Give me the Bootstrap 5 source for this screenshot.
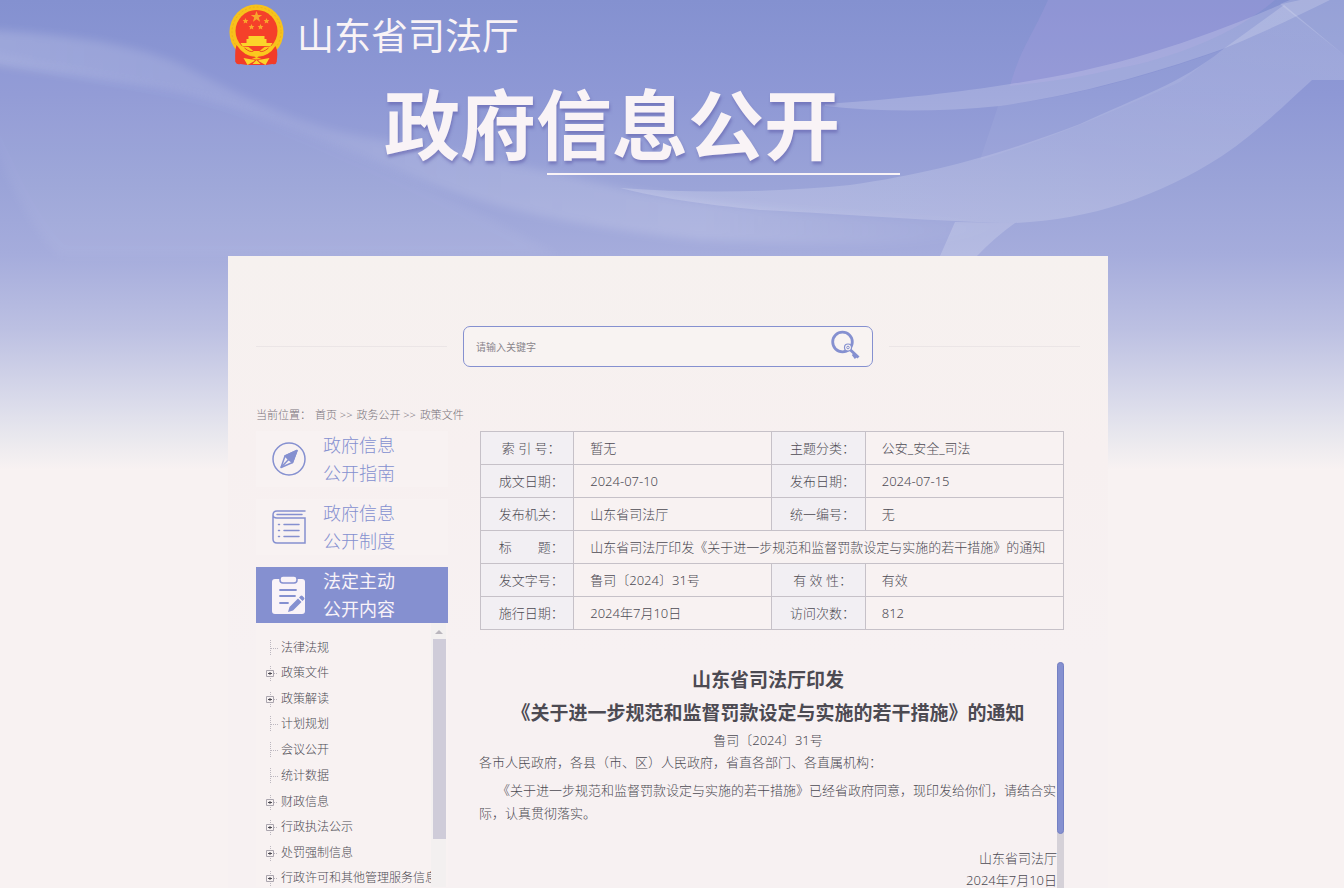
<!DOCTYPE html>
<html lang="zh-CN">
<head>
<meta charset="utf-8">
<meta name="viewport" content="width=device-width, initial-scale=1">
<title>山东省司法厅 - 政府信息公开</title>
<link href="https://cdn.jsdelivr.net/npm/bootstrap@5.3.0/dist/css/bootstrap.min.css" rel="stylesheet">
<style>
  :root { --brand: #8590d0; --ink: #4c4a52; --paper: #f8f2f2; --line: #c6c1c8; }
  body { background: var(--paper); color: var(--ink); font-family: "Noto Sans", "Noto Sans CJK SC", sans-serif; font-size: 13px; font-weight: 300; line-height: 23px; padding-right: 8px; }
  a { color: inherit; text-decoration: none; }
  .backdrop { height: 470px; z-index: -1; }
  .page-wrap { max-width: 880px; min-height: 100vh; }
  .masthead { height: 256px; color: #f9f3f6; }
  .brand-row { height: 72px; gap: 12px; padding-bottom: 4px; }
  .site-name { font-size: 37px; line-height: 64px; font-weight: 400; padding-top: 4px; }
  .banner-title { font-size: 76px; line-height: 80px; font-weight: 700; margin: 13px 0 0 156px; text-shadow: 1px 3px 3px rgba(90, 85, 165, .5); }
  .banner-rule { height: 2px; width: 353px; margin: 8px 0 0 319px; background: #f9f3f6; }
  .sheet { background: linear-gradient(#f6f1ef, #f7f0f0 200px, #f7f1f2 400px); padding: 70px 28px 0; }
  .search-row { gap: 16px; }
  .hair { height: 1px; background: #ebe5e6; }
  .search-box { width: 410px; height: 41px; border: 1px solid var(--brand); border-radius: 7px; background: #f8f3f2; }
  .search-box input { border: 0; background: none; outline: 0; font-size: 10px; padding: 0 12px; color: var(--ink); }
  .search-box input::placeholder { color: #8a858c; opacity: 1; }
  .search-box button { border: 0; background: none; padding: 0 12px 4px 0; }
  .crumbs { font-size: 11px; line-height: 16px; color: #79737b; margin-top: 40px; margin-bottom: 8px; }
  .side { width: 192px; }
  .side-link { height: 56px; background: #f8f2f2; color: var(--brand); font-size: 18px; line-height: 28px; padding-left: 16px; gap: 17px; margin-bottom: 12px; }
  .side-link.current { background: var(--brand); color: #f9f3f8; margin-bottom: 0; font-weight: 400; }
  .tree-box { height: 264px; background: #f8f2f2; overflow: hidden; }
  .tree { font-size: 12px; padding: 12px 0 0 10px; overflow: hidden; }
  .tree li { height: 26px; line-height: 26px; white-space: nowrap; margin-bottom: -1px; }
  .tree li:nth-child(even), .tree li:nth-child(5) { margin-bottom: 0; }
  .tree svg { margin-right: 3px; }
  .rail { width: 15px; background: #f3f0f0; padding: 6px 0 0; margin-right: 2px; }
  .rail-thumb { width: 13px; height: 200px; margin-left: 2px; background: #cfccd9; }
  .main-col { padding-left: 32px; padding-right: 16px; }
  .meta-table { border-collapse: collapse; table-layout: fixed; background: #f8f2f2; }
  .meta-table th, .meta-table td { border: 1px solid var(--line); height: 33px; padding: 0; font-weight: 300; line-height: 32px; }
  .meta-table th { background: #f2eff3; text-align: center; white-space: pre; padding-left: 8px; }
  .meta-table td { padding-left: 16px; white-space: nowrap; }
  .article-box { margin-top: 32px; }
  .article { min-width: 0; line-height: 22px; margin-left: -1px; }
  .article h1 { font-size: 19px; line-height: 33px; font-weight: 700; margin: 2px 0 -1px; }
  .article p { margin: 0; }
  .article .opening { text-indent: 18px; line-height: 23px; margin: 6px 0 22px; }
  .article-rail { width: 7px; background: #d5d1d8; border-radius: 4px 4px 0 0; }
  .article-thumb { height: 172px; background: var(--brand); border: 1px solid #7480c4; border-radius: 4px; }
</style>
</head>
<body>
<svg class="backdrop position-absolute top-0 start-0 w-100" viewBox="0 0 1344 470" preserveAspectRatio="none" aria-hidden="true">
  <defs>
    <linearGradient id="sky" x1="0" y1="0" x2="0" y2="1">
      <stop offset="0" stop-color="#8491d0"/><stop offset=".2" stop-color="#8e98d5"/><stop offset=".4" stop-color="#9ba4d8"/><stop offset=".54" stop-color="#a5acdc"/>
      <stop offset=".7" stop-color="#bcc0e2"/><stop offset=".85" stop-color="#d9daea"/><stop offset=".93" stop-color="#e9e8ee"/><stop offset="1" stop-color="#f8f2f2"/>
    </linearGradient>
    <linearGradient id="fade" x1="0" y1="0" x2="1" y2="0">
      <stop offset="0" stop-color="#fff" stop-opacity=".17"/><stop offset=".3" stop-color="#fff" stop-opacity=".1"/><stop offset=".7" stop-color="#fff" stop-opacity=".15"/><stop offset="1" stop-color="#fff" stop-opacity="0"/>
    </linearGradient>
    <linearGradient id="leaf" x1="0" y1="1" x2="1" y2="0">
      <stop offset="0" stop-color="#fff" stop-opacity=".2"/><stop offset=".5" stop-color="#fff" stop-opacity=".15"/><stop offset="1" stop-color="#fff" stop-opacity=".18"/>
    </linearGradient>
    <filter id="soft"><feGaussianBlur stdDeviation="4"/></filter>
  </defs>
  <rect width="1344" height="470" fill="url(#sky)"/>
  <path d="M-10 30C60 34 130 42 180 64C240 96 300 124 350 134C440 150 520 164 620 188C720 208 840 216 1010 224C960 244 860 248 700 240C600 230 500 212 420 180C320 140 250 108 170 90C100 78 60 74 -10 64Z" fill="url(#fade)" filter="url(#soft)"/>
  <path d="M-10 50C60 70 180 84 240 106C340 146 440 190 560 256H60C30 230 10 180 -10 140Z" fill="#fff" opacity=".045" filter="url(#soft)"/>
  <path d="M1048 0H1275C1240 30 1180 58 1110 70C1070 80 1040 82 1010 86C1020 50 1030 40 1048 0Z" fill="#b9a4e4" opacity=".2"/>
  <path d="M998 106C1080 96 1160 72 1222 50L1180 82C1120 108 1060 136 980 160Z" fill="#fff" opacity=".05"/>
  <path d="M825 104C900 99 960 92 1010 84C1110 70 1200 40 1282 4L1300 0H1330C1290 20 1250 38 1220 50C1140 78 1070 96 1000 106C940 112 880 112 825 106Z" fill="#fff" opacity=".18"/>
  <path d="M620 188C700 194 780 192 850 185C940 172 1000 154 1080 124C1140 96 1180 84 1222 50L1284 5L1344 55V80H1312C1290 100 1260 130 1222 156C1160 196 1090 220 1015 223C940 222 840 214 760 210C700 204 660 198 620 188Z" fill="url(#leaf)"/>
  <path d="M955 222L1015 223Q994 238 977 256H940Z" fill="#fff" opacity=".18"/>
  <path d="M1280 4L1290 0H1344V55Z" fill="#fff" opacity=".15"/>
</svg>

<div class="page-wrap mx-auto d-flex flex-column">
  <header class="masthead">
    <div class="brand-row d-flex align-items-center">
      <svg width="57" height="62" viewBox="0 0 56 62" class="flex-shrink-0" role="img" aria-label="国徽">
        <path d="M8 44L7 59Q8 62 12 61Q28 64 44 61Q48 62 48 59L47 44Z" fill="#f23c28"/>
        <ellipse cx="28" cy="29" rx="27" ry="27.500" fill="#f7c21c"/>
        <ellipse cx="28" cy="29" rx="24.500" ry="25" fill="none" stroke="#eeb01a" stroke-width="1" stroke-dasharray="2 2"/>
        <path d="M8 42Q6 48 7 59L18 58L28 54L38 58L48 59Q50 48 47 43Q40 54 28 54Q16 54 8 42Z" fill="#f23c28"/>
        <ellipse cx="28" cy="28" rx="21" ry="21" fill="#f5402a"/>
        <path d="M28 8l1.500 4h4.200l-3.400 2.600 1.300 4.200-3.600-2.500-3.600 2.500 1.300-4.200-3.400-2.600h4.200z" fill="#f9a52c"/>
        <g fill="#f9a52c"><path id="st" d="M17 15l.9 1.900 2 .2-1.500 1.400.4 2-1.800-1-1.800 1 .4-2-1.500-1.400 2-.2z"/><use href="#st" x="21"/><use href="#st" x="6" y="6"/><use href="#st" x="15" y="6"/></g>
        <path d="M20 33h16v3h2v4h-20v-4h2zM12 40h32l-2 3H14z" fill="#fbd42a"/>
        <path d="M10 43L20 44L25 48H31L36 44L46 43Q40 53 31 52L28 55L25 52Q16 53 10 43Z" fill="#fbc81f"/>
        <path d="M16 45q6 5 9 3M40 45q-6 5-9 3" stroke="#e9501e" fill="none"/>
        <path d="M15 55l11 2v1l-7 4zM41 55l-11 2v1l7 4zM24 61l4-4 4 4z" fill="#fbd42a"/>
      </svg>
      <div class="site-name">山东省司法厅</div>
    </div>
    <div class="banner-title text-nowrap">政府信息公开</div>
    <div class="banner-rule"></div>
  </header>

  <main class="sheet flex-grow-1">
    <form class="search-row d-flex align-items-center" role="search">
      <div class="hair flex-fill"></div>
      <div class="search-box d-flex align-items-center">
        <input type="text" class="flex-fill h-100" placeholder="请输入关键字" aria-label="请输入关键字">
        <button type="button" aria-label="搜索">
          <svg width="30" height="30" viewBox="0 0 30 30" fill="none" stroke="#8590d0">
            <circle cx="12.500" cy="12" r="9.800" stroke-width="2.800"/>
            <circle cx="18" cy="17.500" r="3.500" fill="#f8f3f2" stroke-width="1.200"/><circle cx="18" cy="17.500" r="1.300"/>
            <path d="M20.500 20l8 7.500M23 24l3 4" stroke-width="3"/>
          </svg>
        </button>
      </div>
      <div class="hair flex-fill"></div>
    </form>

    <nav class="crumbs d-flex" aria-label="当前位置"><span class="me-1">当前位置：</span><span class="me-1"><a href="#">首页</a> &gt;&gt;</span><span class="me-1"><a href="#">政务公开</a> &gt;&gt;</span><a href="#">政策文件</a></nav>

    <div class="d-flex">
      <aside class="side flex-shrink-0">
        <a href="#" class="side-link d-flex align-items-center">
          <svg width="34" height="34" viewBox="0 0 34 34" fill="none" stroke="#8590d0" stroke-width="1.500" stroke-linejoin="round">
            <circle cx="17" cy="17" r="16"/><path d="M25 8.500L20.500 20.500L9 25.500L13 14Z"/><path d="M25 8.500L20.500 20.500L17 18L13 14Z" fill="#8590d0"/><path d="M17 17L9 25.500"/>
          </svg>
          <span>政府信息<br>公开指南</span>
        </a>
        <a href="#" class="side-link d-flex align-items-center">
          <svg width="34" height="34" viewBox="0 0 34 34" fill="none" stroke="#8590d0" stroke-width="1.500" stroke-linecap="round">
            <path d="M33 1H5Q1 1 1 5V29Q1 33 5 33H33V8H5Q1 8 1 5"/><path d="M5 4.500H30M6.500 14.500h1M12 14.500H27M6.500 20.500h1M12 20.500H27M6.500 26.500h1M12 26.500H27"/>
          </svg>
          <span>政府信息<br>公开制度</span>
        </a>
        <a href="#" class="side-link current d-flex align-items-center" aria-current="page">
          <svg width="34" height="38" viewBox="0 0 34 38">
            <rect y="3" width="33" height="35" rx="3" fill="#f9f3f8"/><rect x="8" y="0" width="17" height="7" rx="3" fill="#f9f3f8" stroke="#8590d0" stroke-width="1.500"/>
            <path d="M8 14H24M8 20H23M8 27H16" stroke="#8590d0" stroke-width="1.800" stroke-linecap="round"/>
            <path d="M16 36l1.500-5L26 22.500l3.500 3.500L21 34.500zM27 21.500l1.500-1.500q1-1 2 0l1.500 1.500q1 1 0 2L30.500 25z" fill="#8590d0"/>
          </svg>
          <span>法定主动<br>公开内容</span>
        </a>

        <svg width="0" height="0" class="position-absolute" aria-hidden="true">
          <symbol id="leafnode" viewBox="0 0 12 26"><path d="M4.500 4V19M5 12.500H12" stroke="#bdb8c0" fill="none" stroke-dasharray="1 1"/></symbol>
          <symbol id="plusnode" viewBox="0 0 12 26"><path d="M4.500 5V20M8 12.500H12" stroke="#bdb8c0" fill="none" stroke-dasharray="1 1"/><path d="M.5 9.500h7v6h-7z" fill="#f8f2f2" stroke="#aaa5ae"/><path d="M2 12.500h4M4 11v3" stroke="#4c4a52" fill="none"/></symbol>
        </svg>
        <div class="tree-box d-flex">
          <ul class="tree list-unstyled flex-fill mb-0">
            <li><svg width="12" height="26"><use href="#leafnode"/></svg><a href="#">法律法规</a></li>
            <li><svg width="12" height="26"><use href="#plusnode"/></svg><a href="#">政策文件</a></li>
            <li><svg width="12" height="26"><use href="#plusnode"/></svg><a href="#">政策解读</a></li>
            <li><svg width="12" height="26"><use href="#leafnode"/></svg><a href="#">计划规划</a></li>
            <li><svg width="12" height="26"><use href="#leafnode"/></svg><a href="#">会议公开</a></li>
            <li><svg width="12" height="26"><use href="#leafnode"/></svg><a href="#">统计数据</a></li>
            <li><svg width="12" height="26"><use href="#plusnode"/></svg><a href="#">财政信息</a></li>
            <li><svg width="12" height="26"><use href="#plusnode"/></svg><a href="#">行政执法公示</a></li>
            <li><svg width="12" height="26"><use href="#plusnode"/></svg><a href="#">处罚强制信息</a></li>
            <li><svg width="12" height="26"><use href="#plusnode"/></svg><a href="#">行政许可和其他管理服务信息</a></li>
          </ul>
          <div class="rail flex-shrink-0">
            <svg class="d-block mx-auto mb-1" width="8" height="6" viewBox="0 0 8 6"><path d="M0 5L4 1L8 5Z" fill="#bab6bd"/></svg>
            <div class="rail-thumb"></div>
          </div>
        </div>
      </aside>

      <section class="main-col flex-fill">
        <table class="meta-table w-100">
          <colgroup><col style="width:16%"><col style="width:34%"><col style="width:16%"><col style="width:34%"></colgroup>
          <tbody>
            <tr><th scope="row">索 引 号：</th><td>暂无</td><th scope="row">主题分类：</th><td>公安_安全_司法</td></tr>
            <tr><th scope="row">成文日期：</th><td>2024-07-10</td><th scope="row">发布日期：</th><td>2024-07-15</td></tr>
            <tr><th scope="row">发布机关：</th><td>山东省司法厅</td><th scope="row">统一编号：</th><td>无</td></tr>
            <tr><th scope="row">标　　题：</th><td colspan="3">山东省司法厅印发《关于进一步规范和监督罚款设定与实施的若干措施》的通知</td></tr>
            <tr><th scope="row">发文字号：</th><td>鲁司〔2024〕31号</td><th scope="row">有 效 性：</th><td>有效</td></tr>
            <tr><th scope="row">施行日期：</th><td>2024年7月10日</td><th scope="row">访问次数：</th><td>812</td></tr>
          </tbody>
        </table>
        <div class="article-box d-flex">
          <article class="article flex-fill">
            <h1 class="text-center">山东省司法厅印发<br>《关于进一步规范和监督罚款设定与实施的若干措施》的通知</h1>
            <p class="text-center">鲁司〔2024〕31号</p>
            <p>各市人民政府，各县（市、区）人民政府，省直各部门、各直属机构：</p>
            <p class="opening">《关于进一步规范和监督罚款设定与实施的若干措施》已经省政府同意，现印发给你们，请结合实际，认真贯彻落实。</p>
            <p class="text-end">山东省司法厅<br>2024年7月10日</p>
          </article>
          <div class="article-rail flex-shrink-0"><div class="article-thumb"></div></div>
        </div>
      </section>
    </div>
  </main>
</div>
<script src="https://cdn.jsdelivr.net/npm/bootstrap@5.3.0/dist/js/bootstrap.bundle.min.js"></script>
</body>
</html>
